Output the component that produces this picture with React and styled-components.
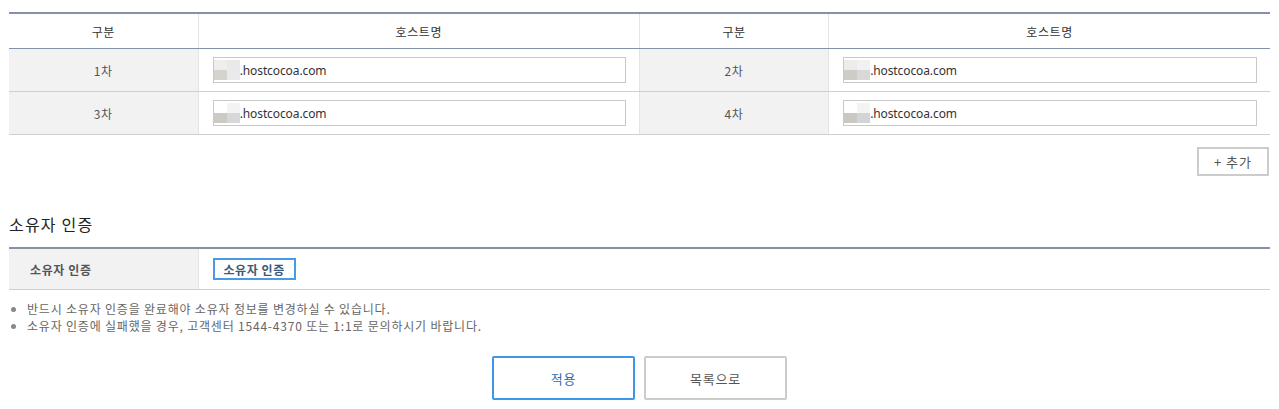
import React from 'react'
import styled, { createGlobalStyle } from 'styled-components'

const GlobalStyle = createGlobalStyle`
  html, body {
    margin: 0;
    padding: 0;
    background: #fff;
  }
  body {
    font-family: 'Noto Sans', 'Noto Sans CJK KR', sans-serif;
    color: #444;
  }
`

const hosts = [
  [
    { label: '1차', blur: ['#eee', '#e9e9e9', '#d6d2cd', '#eaeaea'] },
    { label: '2차', blur: ['#ececec', '#f1f1f1', '#cfcbc6', '#d8d8d8'] }
  ],
  [
    { label: '3차', blur: ['#fff', '#f3f3f3', '#cdc9c3', '#d7d7da'] },
    { label: '4차', blur: ['#fff', '#f4f4f4', '#cbc7c2', '#d3d4d8'] }
  ]
]

const notes = [
  '반드시 소유자 인증을 완료해야 소유자 정보를 변경하실 수 있습니다.',
  '소유자 인증에 실패했을 경우, 고객센터 1544-4370 또는 1:1로 문의하시기 바랍니다.'
]

const Blur = ({ colors }) => (
  <BlurBox>
    {colors.map((c, i) => (
      <BlurCell key={i} style={{ background: c }} />
    ))}
  </BlurBox>
)

const App = () => {
  return (
    <Page>
      <GlobalStyle />
      <Table>
        <colgroup>
          <col style={{ width: '15%' }} />
          <col style={{ width: '35%' }} />
          <col style={{ width: '15%' }} />
          <col style={{ width: '35%' }} />
        </colgroup>
        <thead>
          <tr>
            <Th>구분</Th>
            <Th>호스트명</Th>
            <Th>구분</Th>
            <Th>호스트명</Th>
          </tr>
        </thead>
        <tbody>
          {hosts.map((row, r) => (
            <tr key={r}>
              {row.map(h => (
                <React.Fragment key={h.label}>
                  <Label>{h.label}</Label>
                  <Cell>
                    <FakeInput>
                      <Blur colors={h.blur} />
                      <span>.hostcocoa.com</span>
                    </FakeInput>
                  </Cell>
                </React.Fragment>
              ))}
            </tr>
          ))}
        </tbody>
      </Table>

      <AddRow>
        <AddButton>+ 추가</AddButton>
      </AddRow>

      <SectionTitle>소유자 인증</SectionTitle>
      <Table>
        <colgroup>
          <col style={{ width: '15%' }} />
          <col style={{ width: '85%' }} />
        </colgroup>
        <tbody>
          <tr>
            <Label left h={40}>
              소유자 인증
            </Label>
            <Cell h={40}>
              <AuthButton>소유자 인증</AuthButton>
            </Cell>
          </tr>
        </tbody>
      </Table>

      <Notes>
        {notes.map(n => (
          <li key={n}>{n}</li>
        ))}
      </Notes>

      <Actions>
        <ActionButton primary>적용</ActionButton>
        <ActionButton>목록으로</ActionButton>
      </Actions>
    </Page>
  )
}

export default App

const Page = styled.div`
  padding: 12px 9px 0;
`
const Table = styled.table`
  width: 100%;
  border-collapse: collapse;
  table-layout: fixed;
  border-top: 2px solid #8293a5;
`
const Th = styled.th`
  height: 34px;
  padding: 0;
  font-family: 'Noto Sans CJK KR', sans-serif;
  font-size: 12px;
  font-weight: normal;
  letter-spacing: 0.6px;
  color: #333;
  text-align: center;
  border-bottom: 1px solid #8293a5;
  border-left: 1px solid #e3e3e3;
  &:first-child {
    border-left: 0;
  }
`
const Label = styled.td`
  height: ${props => props.h || 42}px;
  padding: ${props => (props.left ? '0 0 0 21px' : '0')};
  background: #f2f2f2;
  font-family: 'Noto Sans CJK KR', sans-serif;
  font-size: 12px;
  font-weight: ${props => (props.left ? 'bold' : 'normal')};
  letter-spacing: 0.6px;
  color: #555;
  text-align: ${props => (props.left ? 'left' : 'center')};
  border-bottom: 1px solid #cfcfcf;
  border-left: 1px solid #e3e3e3;
  &:first-child {
    border-left: 0;
  }
`
const Cell = styled.td`
  height: ${props => props.h || 42}px;
  padding: 0 13px 0 14px;
  border-bottom: 1px solid #cfcfcf;
  border-left: 1px solid #e3e3e3;
`
const FakeInput = styled.div`
  display: flex;
  align-items: center;
  height: 24px;
  border: 1px solid #c9c9c9;
  font-size: 12px;
  color: #333;
  letter-spacing: -0.1px;
`
const BlurBox = styled.span`
  display: grid;
  grid-template-columns: 13px 13px;
  grid-template-rows: 10px 10px;
  width: 26px;
  height: 20px;
`
const BlurCell = styled.span`
  display: block;
`
const AddRow = styled.div`
  display: flex;
  justify-content: flex-end;
  margin-top: 12px;
  padding-right: 1px;
`
const AddButton = styled.button`
  width: 72px;
  height: 29px;
  padding: 0;
  background: #fff;
  border: 2px solid #cccccc;
  font-family: 'Noto Sans CJK KR', sans-serif;
  font-size: 13px;
  letter-spacing: 1px;
  color: #555;
`
const SectionTitle = styled.h3`
  margin: 36px 0 0;
  height: 35px;
  font-family: 'Noto Sans CJK KR', sans-serif;
  font-size: 16px;
  font-weight: normal;
  letter-spacing: 1.2px;
  color: #222;
  line-height: 24px;
`
const AuthButton = styled.button`
  display: block;
  width: 83px;
  height: 22px;
  padding: 0;
  background: #fff;
  border: 2px solid #4899e6;
  font-family: 'Noto Sans CJK KR', sans-serif;
  font-size: 12px;
  font-weight: bold;
  letter-spacing: 0.6px;
  color: #3b5a78;
`
const Notes = styled.ul`
  margin: 10px 0 0;
  padding: 0 0 0 18px;
  font-family: 'Noto Sans CJK KR', sans-serif;
  font-size: 12px;
  letter-spacing: 0.8px;
  color: #666;
  line-height: 17px;
  li::marker {
    color: #888;
  }
`
const Actions = styled.div`
  display: flex;
  justify-content: center;
  gap: 9px;
  margin-top: 22px;
`
const ActionButton = styled.button`
  width: 143px;
  height: 44px;
  padding: 0;
  background: #fff;
  border: 2px solid ${props => (props.primary ? '#3d96e8' : '#cccccc')};
  border-radius: 2px;
  font-family: 'Noto Sans CJK KR', sans-serif;
  font-size: 13px;
  letter-spacing: 0.8px;
  color: ${props => (props.primary ? '#2f6aa8' : '#555')};
`
